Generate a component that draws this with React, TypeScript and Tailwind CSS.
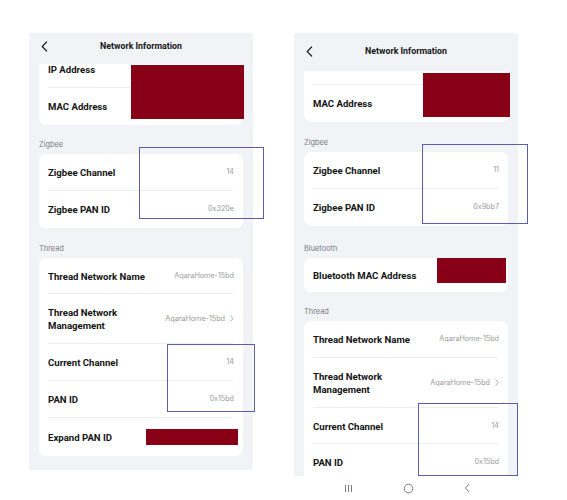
import React from "react";

const font = { fontFamily: "Inter, Roboto, 'Noto Sans', sans-serif" };
const labelFont = { fontFamily: "Roboto, Inter, 'Noto Sans', sans-serif" };

function BackIcon() {
  return (
    <svg width="7" height="11" viewBox="0 0 7 11" fill="none">
      <polyline points="5.6,1 1.2,5.5 5.6,10" stroke="#222" strokeWidth="1.2" strokeLinecap="round" strokeLinejoin="round" />
    </svg>
  );
}

function SmallChevron() {
  return (
    <svg width="4" height="7" viewBox="0 0 4 7" fill="none">
      <polyline points="0.8,0.8 3.2,3.5 0.8,6.2" stroke="#9a9a9a" strokeWidth="0.8" strokeLinecap="round" strokeLinejoin="round" />
    </svg>
  );
}

function Header({ height, titleTop }: { height: string; titleTop: string }) {
  return (
    <div className={`relative shrink-0 ${height}`}>
      <div className={`absolute left-[12px] ${titleTop}`}>
        <BackIcon />
      </div>
      <div
        className={`absolute inset-x-0 ${titleTop} text-center text-[8.8px] leading-[11px] font-bold text-[#161616]`}
        style={labelFont}
      >
        Network Information
      </div>
    </div>
  );
}

function Row({
  label,
  value,
  h,
  last,
  chevron,
  children,
}: {
  label?: React.ReactNode;
  value?: string;
  h: string;
  last?: boolean;
  chevron?: boolean;
  children?: React.ReactNode;
}) {
  return (
    <div className={`relative flex items-center justify-between px-[9px] ${h}`}>
      <div className="text-[9.6px] leading-[13px] font-bold text-[#141414]" style={labelFont}>
        {label}
      </div>
      {value && (
        <div className="flex items-center gap-[5px] text-[7.2px] text-[#9a9a9a]">
          <span>{value}</span>
          {chevron && <SmallChevron />}
        </div>
      )}
      {children}
      {!last && <div className="absolute bottom-0 left-[9px] right-[10px] h-px bg-[#ededf0]" />}
    </div>
  );
}

function Section({ title, h }: { title: string; h: string }) {
  return (
    <div className={`flex items-end ${h} pb-[4px] px-[10px] text-[7.4px] leading-[10px] text-[#7d7d7d]`}>
      {title}
    </div>
  );
}

function Card({ children }: { children: React.ReactNode }) {
  return <div className="relative mx-[10px] rounded-[7px] bg-white">{children}</div>;
}

function Redact({ className }: { className: string }) {
  return <div className={`absolute bg-[#880016] ${className}`} />;
}

function Mark({ className }: { className: string }) {
  return <div className={`absolute border border-[#5d5ca6] ${className}`} />;
}

function LeftPhone() {
  return (
    <div className="relative flex h-[437px] w-[224px] flex-col overflow-hidden bg-[#f2f3f7]">
      <Header height="h-[31px]" titleTop="top-[8px]" />
      <div className="flex-1 overflow-hidden">
        <div className="mt-[-13px]">
          <Card>
            <Row label="IP Address" h="h-[37px]" />
            <Row label="MAC Address" h="h-[37px]" last />
            <Redact className="left-[92px] -right-px top-[14px] h-[54px]" />
          </Card>
          <Section title="Zigbee" h="h-[29px]" />
          <Card>
            <Row label="Zigbee Channel" value="14" h="h-[37px]" />
            <Row label="Zigbee PAN ID" value="0x320e" h="h-[37px]" last />
          </Card>
          <Section title="Thread" h="h-[30px]" />
          <Card>
            <Row label="Thread Network Name" value="AqaraHome-15bd" h="h-[36px]" />
            <Row
              label={
                <>
                  Thread Network
                  <br />
                  Management
                </>
              }
              value="AqaraHome-15bd"
              chevron
              h="h-[50px]"
            />
            <Row label="Current Channel" value="14" h="h-[37px]" />
            <Row label="PAN ID" value="0x15bd" h="h-[37px]" />
            <Row label="Expand PAN ID" h="h-[38px]" last>
              <div className="mr-[-4px] h-[16px] w-[92px] bg-[#880016]" />
            </Row>
          </Card>
        </div>
      </div>
    </div>
  );
}

function RightPhone() {
  return (
    <div className="flex w-[224px] flex-col">
      <div className="relative flex h-[443px] flex-col overflow-hidden bg-[#f2f3f7]">
        <Header height="h-[38px]" titleTop="top-[13px]" />
        <div className="flex-1 overflow-hidden">
          <div className="mt-[-23px]">
            <Card>
              {/* upper row scrolled under the header */}
              <Row h="h-[37px]" />
              <Row label="MAC Address" h="h-[37px]" last />
              <Redact className="left-[119px] w-[87px] top-[25px] h-[44px]" />
            </Card>
            <Section title="Zigbee" h="h-[30px]" />
            <Card>
              <Row label="Zigbee Channel" value="11" h="h-[37px]" />
              <Row label="Zigbee PAN ID" value="0x9bb7" h="h-[37px]" last />
            </Card>
            <Section title="Bluetooth" h="h-[32px]" />
            <Card>
              <Row label="Bluetooth MAC Address" h="h-[34px]" last />
              <Redact className="left-[133px] w-[69px] top-0 h-[25px]" />
            </Card>
            <Section title="Thread" h="h-[29px]" />
            <Card>
              <Row label="Thread Network Name" value="AqaraHome-15bd" h="h-[37px]" />
              <Row
                label={
                  <>
                    Thread Network
                    <br />
                    Management
                  </>
                }
                value="AqaraHome-15bd"
                chevron
                h="h-[50px]"
              />
              <Row label="Current Channel" value="14" h="h-[36px]" />
              <Row label="PAN ID" value="0x15bd" h="h-[37px]" />
            </Card>
          </div>
        </div>
      </div>
      {/* system navigation bar */}
      <div className="flex h-[24px] items-center justify-center gap-[50px] pl-[2px]">
        <svg width="9" height="9" viewBox="0 0 9 9">
          <line x1="1.5" y1="1" x2="1.5" y2="8" stroke="#7a7a7a" strokeWidth="1" />
          <line x1="4.5" y1="1" x2="4.5" y2="8" stroke="#7a7a7a" strokeWidth="1" />
          <line x1="7.5" y1="1" x2="7.5" y2="8" stroke="#7a7a7a" strokeWidth="1" />
        </svg>
        <svg width="11" height="11" viewBox="0 0 11 11">
          <circle cx="5.5" cy="5.5" r="4.3" fill="none" stroke="#7a7a7a" strokeWidth="1" />
        </svg>
        <svg width="7" height="10" viewBox="0 0 7 10">
          <polyline points="5,1 1.5,5 5,9" fill="none" stroke="#7a7a7a" strokeWidth="1" />
        </svg>
      </div>
    </div>
  );
}

export default function App() {
  return (
    <div className="relative h-[500px] w-[567px] overflow-hidden bg-white" style={font}>
      <div className="flex gap-[41px] pl-[29px] pt-[33px]">
        <LeftPhone />
        <RightPhone />
      </div>
      <Mark className="left-[139px] top-[147px] w-[125px] h-[72px]" />
      <Mark className="left-[167px] top-[344px] w-[88px] h-[68px]" />
      <Mark className="left-[422px] top-[144px] w-[106px] h-[80px]" />
      <Mark className="left-[418px] top-[403px] w-[100px] h-[73px]" />
    </div>
  );
}
